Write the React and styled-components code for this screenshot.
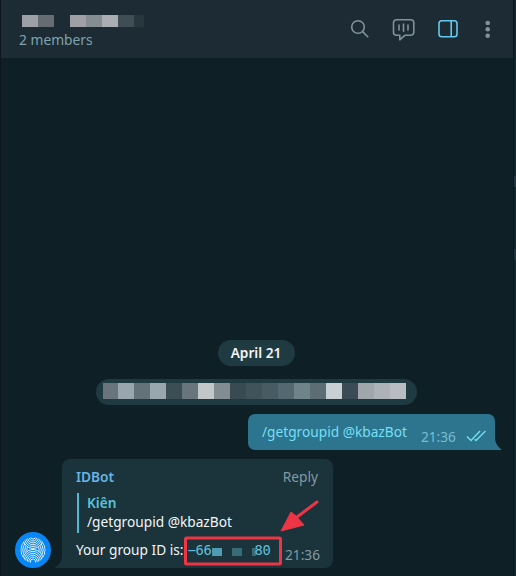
import React from "react";
import styled, { createGlobalStyle } from "styled-components";

const Global = createGlobalStyle`
  * { box-sizing: border-box; }
  html, body { margin: 0; background: #0e1f26; }
  body { font-family: "Noto Sans", "Open Sans", sans-serif; font-size: 13.7px; line-height: 18px; color: #f2f6f7; }
`;

const Window = styled.div`
  display: flex;
  width: 516px;
  height: 576px;
  overflow: hidden;
  background: #0e1f26;
`;

const Chat = styled.main`
  display: flex;
  flex-direction: column;
  width: 513px;
  height: 576px;
  border-left: 1px solid #0b171c;
`;

const SideEdge = styled.aside`
  display: flex;
  flex-direction: column;
  width: 3px;
  background: #12252d;
  border-left: 1px solid #0a171d;
`;

const EdgeMark = styled.i`
  height: 11px;
  margin-top: ${(p) => p.$gap}px;
  background: #20353d;
`;

const Header = styled.header`
  display: flex;
  justify-content: space-between;
  height: 58px;
  padding: 15px 21px 0 18px;
  background: #1d2c34;
`;

const Title = styled.div`
  display: flex;
  flex-direction: column;
  gap: 4px;
`;

const Mosaic = styled.div`
  display: flex;
  height: ${(p) => p.$height}px;
  margin-left: ${(p) => p.$indent || 0}px;
`;

const Tile = styled.span`
  flex-shrink: 0;
  width: ${(p) => p.$width || 16}px;
  background: ${(p) => p.$color};
`;

const Members = styled.div`
  color: #7fa3ac;
  font-size: 13.8px;
`;

const Tools = styled.nav`
  display: flex;
  align-items: flex-start;
  padding-top: 2px;
`;

const Tool = styled.button`
  display: flex;
  padding: 0;
  border: 0;
  background: none;
  color: ${(p) => (p.$active ? "#65c8ec" : "#7f929b")};
  margin-left: ${(p) => p.$gap}px;
`;

const History = styled.section`
  display: flex;
  flex-direction: column;
  height: 518px;
  padding: 282px 2px 0 0;
`;

const DatePill = styled.div`
  align-self: center;
  width: 77px;
  height: 26px;
  border-radius: 13px;
  background: #203a42;
  font-weight: 600;
  line-height: 26px;
  text-align: center;
`;

const ServicePill = styled.div`
  align-self: center;
  width: 321px;
  height: 26px;
  margin-top: 13px;
  padding: 4px 7px;
  border-radius: 13px;
  background: #203a42;
`;

const Outgoing = styled.div`
  display: flex;
  align-self: flex-end;
  margin: 9px 9px 0 0;
`;

const OutBubble = styled.div`
  display: flex;
  width: 247px;
  height: 36px;
  padding: 9px 8px 0 14px;
  border-radius: 7px 7px 0 7px;
  background: #2d748e;
  color: #76dff4;
`;

const OutTime = styled.div`
  display: flex;
  gap: 10px;
  margin: 5px 0 0 14px;
  color: #78bdd3;
`;

const Incoming = styled.div`
  display: flex;
  align-items: flex-end;
  height: 109px;
  margin: 9px 0 0 14px;
`;

const InBubble = styled.article`
  width: 271px;
  height: 109px;
  padding: 9px 12px 0 14px;
  border-radius: 8px 8px 8px 0;
  background: #1b333b;
`;

const SenderRow = styled.div`
  display: flex;
  justify-content: space-between;
  padding-right: 3px;
  color: #839aa3;
`;

const Sender = styled.span`
  color: #65b5e5;
  font-weight: 600;
`;

const Quote = styled.blockquote`
  height: 40px;
  margin: 7px 0 0 1px;
  padding-left: 8px;
  border-left: 2px solid #50bad2;
  line-height: 18px;
`;

const QuoteName = styled.div`
  color: #57c4dc;
  font-weight: 600;
  line-height: 20px;
`;

const Line = styled.div`
  display: flex;
  position: relative;
  margin-top: 8px;
  white-space: nowrap;
`;

const Code = styled.span`
  display: flex;
  margin-left: 4px;
  color: #61bfd9;
  font-family: "DejaVu Sans Mono", monospace;
  font-size: 13.8px;
  letter-spacing: -0.3px;
`;

const Redacted = styled.span`
  display: flex;
  width: 43px;
  height: 8px;
  margin-top: 7px;
`;

const InTime = styled.span`
  position: absolute;
  left: 209px;
  top: 5px;
  color: #839aa3;
`;

const Annotation = styled.svg`
  position: absolute;
  left: 106px;
  top: -43px;
  overflow: visible;
`;

const headerTiles = ["#9da0a6", "#656d73", "#1d2c34", "#a09fa6", "#858d93", "#aaadb2", "#404d55"];
const serviceTiles = ["#69747b", "#9aa6ae", "#637178", "#9aa6ad", "#3c4d54", "#69757c", "#c3c7ca", "#838d91", "#384b52", "#40525a", "#475b62", "#536870", "#6e838a", "#5e6d74", "#c8d0d4", "#3b4b55", "#a1a6aa", "#adb2b8", "#b9bdc3"];

const sideRidges = [12.2, 10.2, 8.2, 6.2];
const loopRidges = [12.6, 10.7, 8.8, 6.9, 5, 3.1];

function Avatar() {
  return (
    <svg width="36" height="36" viewBox="0 0 36 36">
      <defs><clipPath id="print"><circle cx="18" cy="18" r="12.7" /></clipPath></defs>
      <circle cx="18" cy="18" r="18" fill="#0787f5" />
      <g clipPath="url(#print)" fill="none" stroke="#e8f6ff" strokeWidth="0.95">
        {sideRidges.map((r) => <circle key={r} cx="18" cy="18" r={r} />)}
        {loopRidges.map((r) => <ellipse key={r} cx="18" cy="30" rx={r * 0.85} ry={r} fill="#0787f5" />)}
        {loopRidges.map((r) => <ellipse key={r} cx="18" cy="4" rx={r * 0.85} ry={r} fill="#0787f5" />)}
      </g>
    </svg>
  );
}

export default function App() {
  return (
    <>
      <Global />
      <Window>
        <Chat>
          <Header>
            <Title>
              <Mosaic $height={12} $indent={3}>
                {headerTiles.map((c, i) => <Tile key={i} $color={c} />)}
                <Tile $color="#28363e" $width={10} />
              </Mosaic>
              <Members>2 members</Members>
            </Title>
            <Tools>
              <Tool aria-label="Search">
                <svg width="20" height="22" viewBox="0 0 20 22" fill="none" stroke="currentColor" strokeWidth="1.6"><circle cx="8" cy="10" r="6.3" /><path d="M12.6 14.6l5.6 5.6" /></svg>
              </Tool>
              <Tool $gap={22} aria-label="Video chat">
                <svg width="24" height="26" viewBox="0 0 24 26" fill="none" stroke="currentColor" strokeWidth="1.6" strokeLinejoin="round" strokeLinecap="round"><path d="M4.5 2.8h14.3a3 3 0 0 1 3 3v9.5a3 3 0 0 1-3 3h-6l-5 4.5v-4.5H4.5a3 3 0 0 1-3-3V5.8a3 3 0 0 1 3-3zM7 8v5M11.5 7v7.3M16 8v5" /></svg>
              </Tool>
              <Tool $active $gap={21} aria-label="Info panel">
                <svg width="22" height="24" viewBox="0 0 22 24" fill="none" stroke="currentColor" strokeWidth="1.6"><rect x="2" y="3.7" width="18" height="16" rx="2.7" /><path d="M14.2 3.7v16" /></svg>
              </Tool>
              <Tool $gap={25} aria-label="Menu">
                <svg width="8" height="24" viewBox="0 0 8 24" fill="currentColor"><circle cx="3.7" cy="6" r="2.3" /><circle cx="3.7" cy="12.3" r="2.3" /><circle cx="3.7" cy="18.7" r="2.3" /></svg>
              </Tool>
            </Tools>
          </Header>
          <History>
            <DatePill>April 21</DatePill>
            <ServicePill>
              <Mosaic $height={16}>{serviceTiles.map((c, i) => <Tile key={i} $color={c} $width={i === 0 ? 15 : 16} />)}</Mosaic>
            </ServicePill>
            <Outgoing>
              <OutBubble>
                <span>/getgroupid @kbazBot</span>
                <OutTime>
                  21:36
                  <svg width="20" height="18" viewBox="0 0 20 18" fill="none" stroke="#72dff2" strokeWidth="1.4"><path d="M1 8.5l4 4L14 3M8.7 11.2l1.3 1.3L19.5 3" /></svg>
                </OutTime>
              </OutBubble>
              <svg width="7" height="36" viewBox="0 0 7 36"><path d="M0 23C0 29 3 33 7 36H0z" fill="#2d748e" /></svg>
            </Outgoing>
            <Incoming>
              <Avatar />
              <svg width="11" height="36" viewBox="0 0 11 36"><path d="M11 23C11 29 8 33 4 36H11z" fill="#1b333b" /></svg>
              <InBubble>
                <SenderRow><Sender>IDBot</Sender><span>Reply</span></SenderRow>
                <Quote><QuoteName>Kiên</QuoteName>/getgroupid @kbazBot</Quote>
                <Line>
                  Your group ID is:
                  <Code>−66<Redacted><Tile $color="#4e9bb3" $width={10} /><Tile $width={10} $color="transparent" /><Tile $color="#396b76" $width={10} /><Tile $width={10} $color="transparent" /><Tile $color="#396b76" $width={4} /></Redacted>80</Code>
                  <InTime>21:36</InTime>
                  <Annotation width="140" height="72" viewBox="0 0 140 72">
                    <rect x="3.5" y="40" width="95" height="26" rx="1" fill="none" stroke="#ed3545" strokeWidth="3" />
                    <path d="M135 4L115 19" stroke="#ed3545" strokeWidth="3" strokeLinecap="round" />
                    <path d="M99 33L109 14L114 18L122 27z" fill="#ed3545" stroke="#ed3545" strokeLinejoin="round" />
                  </Annotation>
                </Line>
              </InBubble>
            </Incoming>
          </History>
        </Chat>
        <SideEdge><EdgeMark $gap={176} /><EdgeMark $gap={62} /></SideEdge>
      </Window>
    </>
  );
}
